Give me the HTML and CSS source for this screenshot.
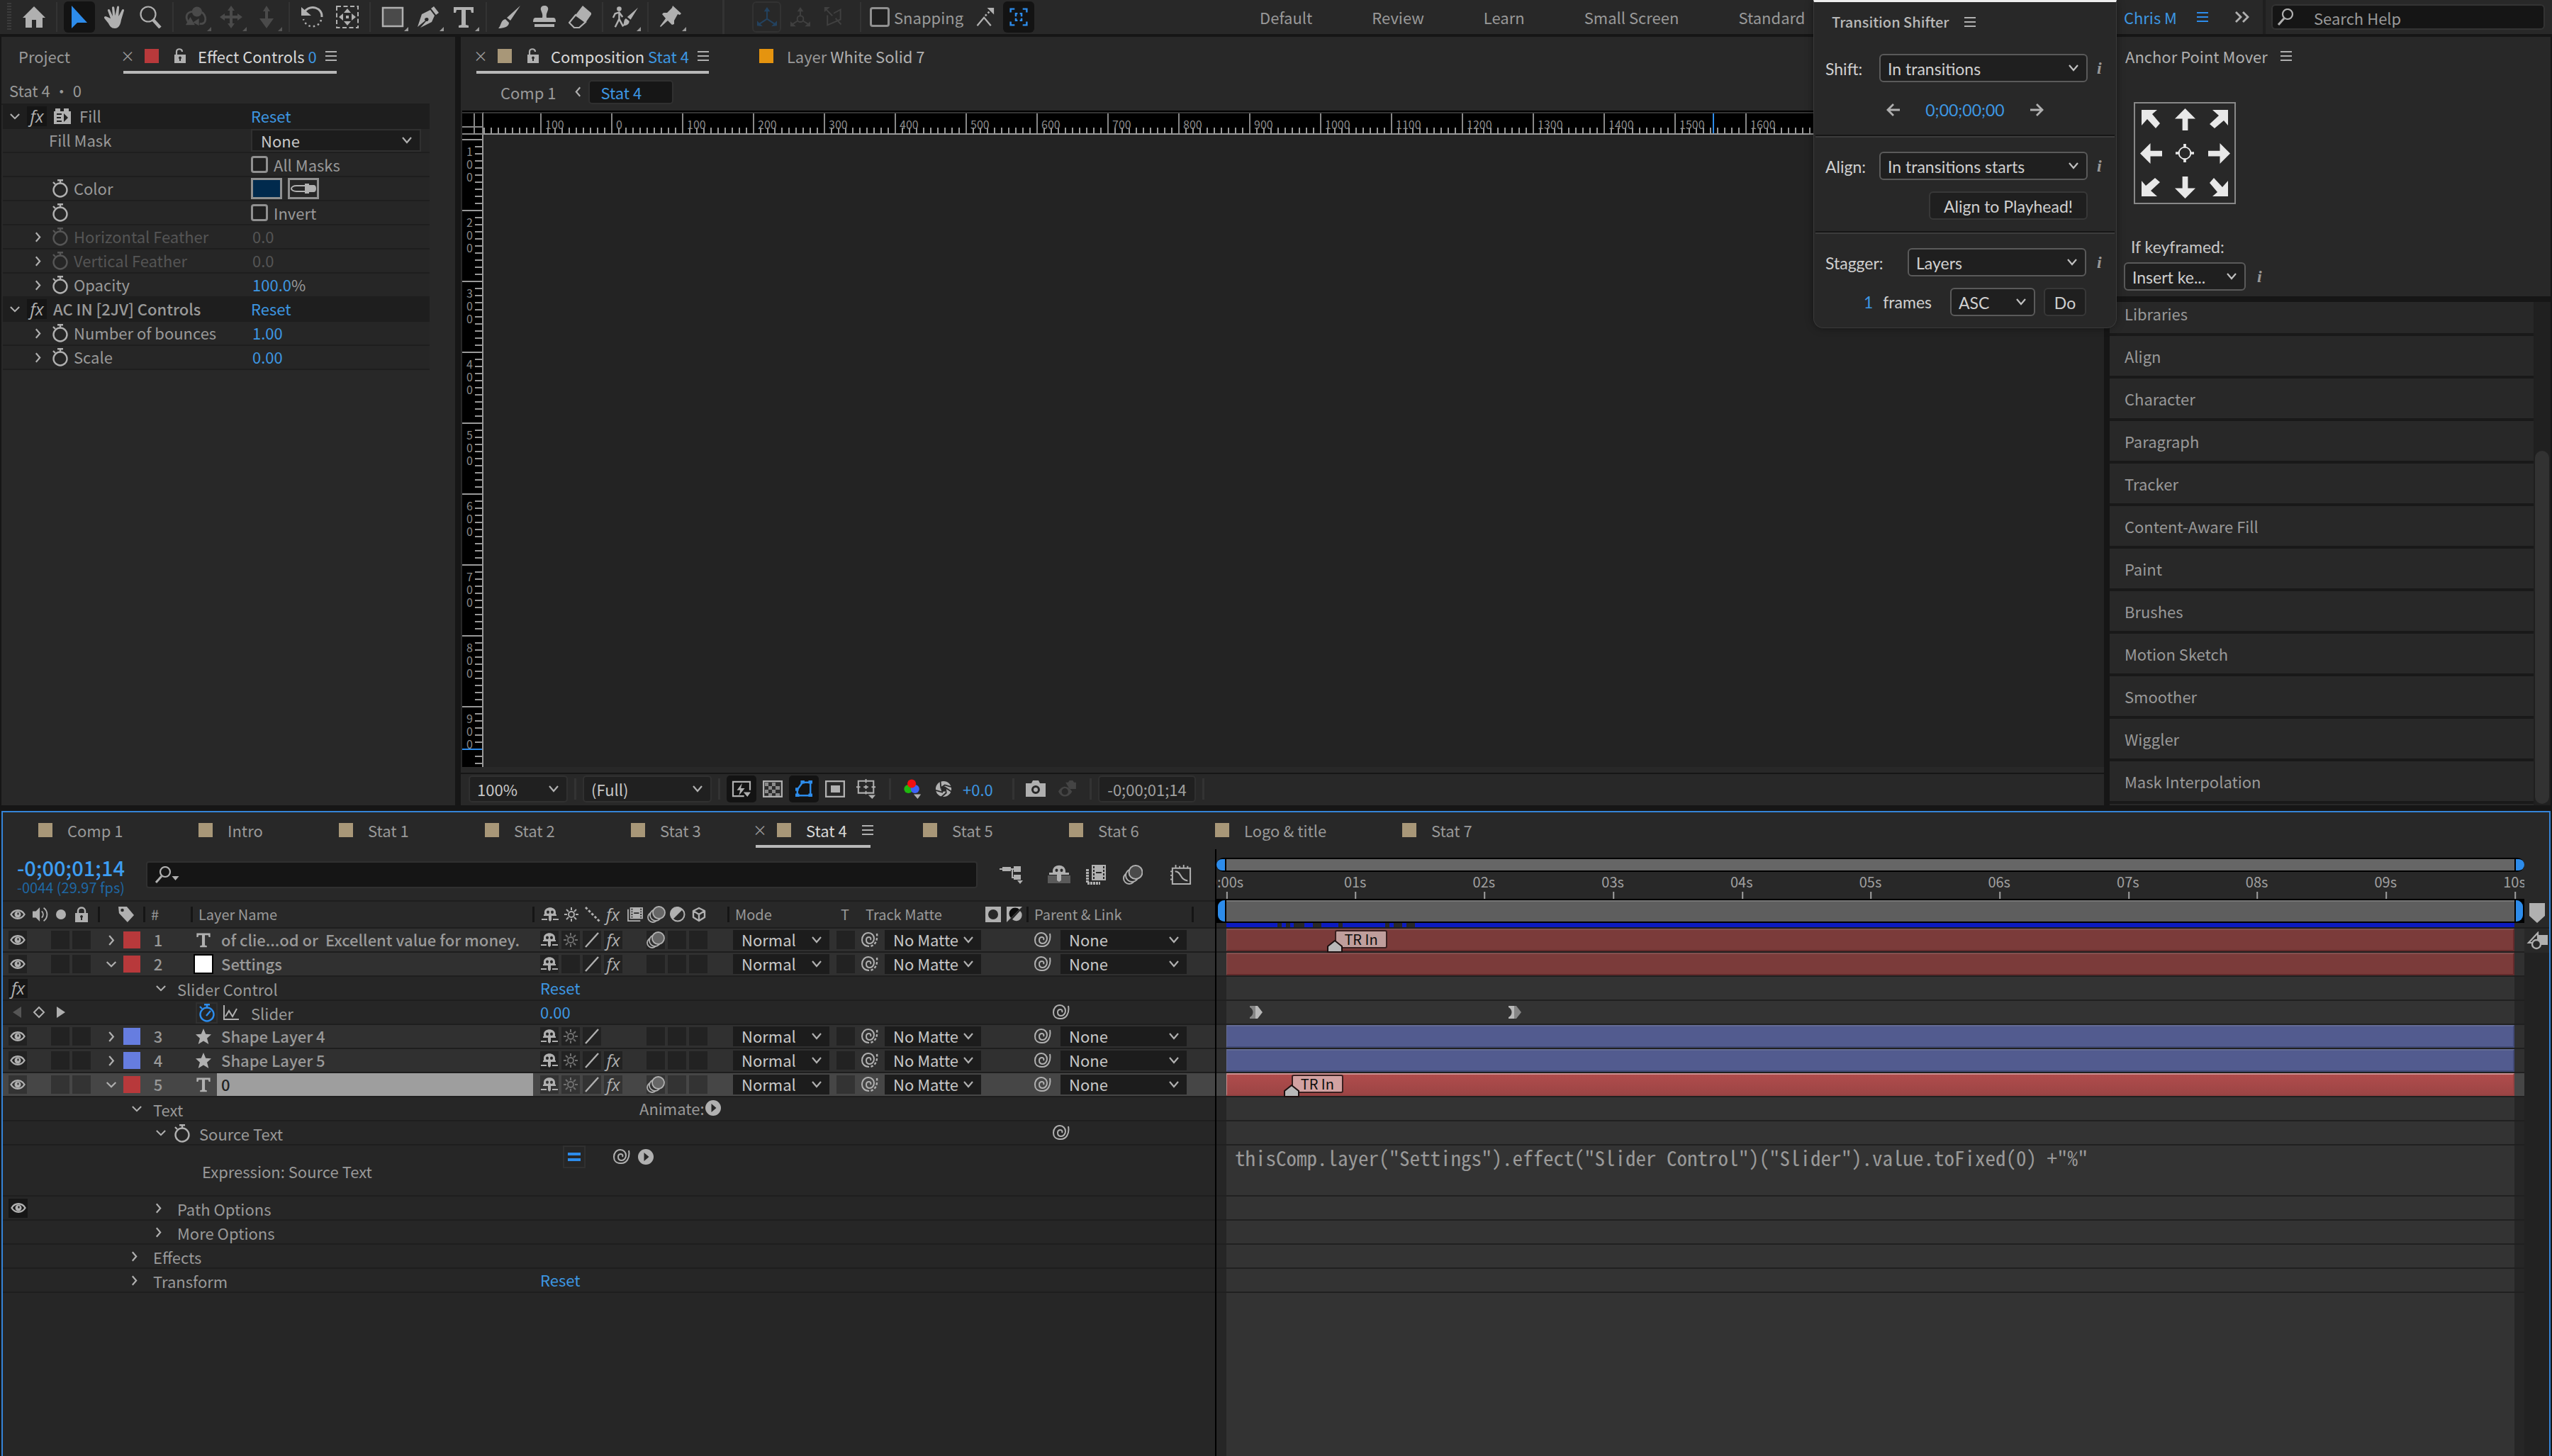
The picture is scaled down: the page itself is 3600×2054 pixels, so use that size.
FILE: index.html
```
<!DOCTYPE html>
<html lang="en">
<head>
<meta charset="utf-8">
<title>Stat 4</title>
<link rel="stylesheet" href="styles.css">
</head>
<body>
<svg class="sprite" aria-hidden="true">
  <symbol id="home" viewBox="0 0 32 32"><path fill="currentColor" d="M16 1 32 17h-4v14h-9V20h-6v11H4V17H0z"/></symbol>
  <symbol id="select" viewBox="0 0 32 32"><path fill="currentColor" d="M5 0v32l8-8h14z"/></symbol>
  <symbol id="hand" viewBox="0 0 32 32"><path fill="currentColor" d="M10 18 6 7c-.6-2 2-3 3-1l4 9-1-12c0-2.400 3-2.400 3.300 0l1.200 11L19 2c.3-2.200 3.300-2 3 .4L21.300 15 26 6c1-2 3.600-1 2.900 1.100L25 20c-1 6-3 12-9 12-5 0-7-3-9-7l-5.600-7c-1.500-2 1-4 3-2.400z"/></symbol>
  <symbol id="magnify" viewBox="0 0 32 32"><g fill="none" stroke="currentColor"><circle cx="13" cy="12" r="10.500" stroke-width="2.200"/><path stroke-width="4.500" d="m20 20 10 11"/></g></symbol>
  <symbol id="orbit" viewBox="0 0 34 32"><g fill="none" stroke="currentColor" stroke-width="3"><path d="M12 8C3 9 1 16 6 24M23 26c12 2 10-14 3-17"/></g><circle cx="19" cy="8" r="7.500" fill="currentColor"/><path fill="currentColor" d="m2 28 14 0L9 16zM22 18v11l-9-5z"/></symbol>
  <symbol id="pan" viewBox="0 0 32 32"><path fill="currentColor" d="m16 0 5 7h-3v7h7v-3l7 5-7 5v-3h-7v7h3l-5 7-5-7h3v-7H7v3l-7-5 7-5v3h7V7h-3z"/></symbol>
  <symbol id="dolly" viewBox="0 0 32 32"><path fill="currentColor" d="m16 0 5 8h-3v10h8L16 32 6 18h8V8h-3z"/></symbol>
  <symbol id="rotate" viewBox="0 0 32 32"><path fill="none" stroke="currentColor" stroke-width="3" d="M5 9C14-3 31 3 30 16"/><path fill="none" stroke="currentColor" stroke-width="2.500" stroke-dasharray="2.500 4" d="M29 20C26 32 8 33 4 19"/><path fill="currentColor" d="M1 2v12h14z"/></symbol>
  <symbol id="anchor" viewBox="0 0 32 32"><g fill="none" stroke="currentColor" stroke-width="2"><path stroke-dasharray="6 3.500" d="M1 1h30v30H1z"/></g><path fill="currentColor" d="m16 4 5 6H11zM16 28l5-6H11zM4 16l6-5v10zM28 16l-6-5v10zM14 14h4v4h-4z"/></symbol>
  <symbol id="rect" viewBox="0 0 32 32"><path fill="#4a4a4a" stroke="currentColor" stroke-width="2.500" d="M2 3h28v26H2z"/></symbol>
  <symbol id="pen" viewBox="0 0 32 32"><path fill="currentColor" d="m24 1 7 9-4 3-7-9zM19 6l6 8-4 9-16 8 8-9c4 1 5-5 1-5s-3 4-2 4L1 30l6-18z"/></symbol>
  <symbol id="type" viewBox="0 0 32 32"><path fill="currentColor" d="M2 2h28v8h-3l-1-4h-7v21l4 1v3H9v-3l4-1V6H6l-1 4H2z"/></symbol>
  <symbol id="brush" viewBox="0 0 32 32"><path fill="currentColor" d="M32 0 18 21l-5-4zM11 19l5 5c0 6-8 8-15 8 4-3 3-12 10-13z"/></symbol>
  <symbol id="stamp" viewBox="0 0 32 32"><path fill="currentColor" d="M16 0c4 0 6 3 5 6-1 4-3 5-2 11h10c2 0 3 2 3 6H0c0-4 1-6 3-6h10c1-6-1-7-2-11-1-3 1-6 5-6zM2 26h28v4H2z"/></symbol>
  <symbol id="eraser" viewBox="0 0 32 32"><path fill="currentColor" d="M20 0 33 11 24 24 10 13z"/><path fill="none" stroke="currentColor" stroke-width="2.200" d="m10 13-9 11 7 7h7l9-8z"/></symbol>
  <symbol id="roto" viewBox="0 0 40 32"><circle cx="11" cy="4" r="3.500" fill="currentColor"/><path fill="none" stroke="currentColor" stroke-width="2.600" d="m2 17 3-6 6-2 5 7M11 9v10l-6 12M11 19l6 11"/><path fill="currentColor" d="M39 2 28 20l-5-4zM21 18l5 4c0 6-6 7-10 7 3-3 1-9 5-11z"/></symbol>
  <symbol id="pin" viewBox="0 0 32 32"><path fill="currentColor" d="m19 0 12 11-2 2-3-1-5 9 0 5-3 1-6-6-10 9-1-1L9 18 4 12l2-2h5l7-7z"/></symbol>
  <symbol id="axis" viewBox="0 0 32 32"><path fill="none" stroke="currentColor" stroke-width="2.200" d="M16 5v14L4 27M16 19l12 8"/><path fill="currentColor" d="m16 0 5 7H11zM0 22v8l9 1zM32 22v8l-9 1z"/></symbol>
  <symbol id="axisworld" viewBox="0 0 32 32"><path fill="none" stroke="currentColor" stroke-width="2.200" d="M16 5v9M12 22l-8 5M20 22l8 5"/><circle cx="16" cy="19" r="5" fill="none" stroke="currentColor" stroke-width="2.200"/><path fill="currentColor" d="m16 0 5 7H11zM0 23v8l9 0zM32 23v8l-9 0z"/></symbol>
  <symbol id="axisview" viewBox="0 0 32 32"><path fill="none" stroke="currentColor" stroke-width="2.200" d="M6 13v16l21-9V4L16 10M3 3l11 11M19 18l9 10"/><path fill="currentColor" d="M1 0h9L1 8z"/></symbol>
  <symbol id="snap" viewBox="0 0 32 32"><path fill="none" stroke="currentColor" stroke-width="2.600" d="m4 30 11-13 11 13"/><path fill="none" stroke="currentColor" stroke-width="3" stroke-dasharray="3 3" d="m17 14 9-9"/><path fill="currentColor" d="M20 1h11v11z"/></symbol>
  <symbol id="snapbox" viewBox="0 0 32 32"><path fill="none" stroke="currentColor" stroke-width="3" d="M2 8V2h7M23 2h7v6M30 24v6h-7M9 30H2v-6M11 15v-5h3M18 10h3v5M21 18v4h-3M14 22h-3v-4"/></symbol>
  <symbol id="menu" viewBox="0 0 16 14"><path stroke="currentColor" stroke-width="2" d="M0 1h16M0 7h16M0 13h16"/></symbol>
  <symbol id="unlock" viewBox="0 0 16 22"><path fill="none" stroke="currentColor" stroke-width="2.200" d="M3 10V5c0-5 8-5 8 0"/><path fill="currentColor" fill-rule="evenodd" d="M0 9h16v12H0zM8 11.500a2 2 0 0 0-1 3.700V18h2v-2.800a2 2 0 0 0-1-3.700z"/></symbol>
  <symbol id="down" viewBox="0 0 16 10"><path fill="none" stroke="currentColor" stroke-width="2.400" d="m1 1 7 7 7-7"/></symbol>
  <symbol id="right" viewBox="0 0 10 16"><path fill="none" stroke="currentColor" stroke-width="2.400" d="m2 1 6 7-6 7"/></symbol>
  <symbol id="watch" viewBox="0 0 24 26"><circle cx="12" cy="15" r="9.500" fill="none" stroke="currentColor" stroke-width="2.400"/><path stroke="currentColor" stroke-width="2.400" d="M8 1.200h8M12 1v4M2 4l3 3"/></symbol>
  <symbol id="watchon" viewBox="0 0 24 26"><circle cx="12" cy="15" r="9.500" fill="none" stroke="currentColor" stroke-width="2.400"/><path stroke="currentColor" stroke-width="2.400" d="M8 1.200h8M12 1v4M2 4l3 3M11 17l6-7"/></symbol>
  <symbol id="brick" viewBox="0 0 24 24"><path fill="currentColor" d="M0 5h2V1h7v4h5V1h7v4h3v18H0z"/><path stroke="#202020" stroke-width="2" d="M4 9h7M4 14h6M4 19h7"/><path fill="#202020" d="m14 8 6 6-6 6z"/></symbol>
  <symbol id="dropper" viewBox="0 0 36 14"><path fill="none" stroke="currentColor" stroke-width="2" d="M22 3H8C4 3 1 5 1 7s3 4 7 4h14"/><path fill="currentColor" d="M20 0h6v2h7c4 0 4 10 0 10h-7v2h-6z"/></symbol>
  <symbol id="eye" viewBox="0 0 22 14"><path fill="none" stroke="currentColor" stroke-width="2.400" d="M1.500 7C6-.6 16-.6 20.500 7 16 14.600 6 14.600 1.500 7z"/><path fill="currentColor" fill-rule="evenodd" d="M11 2.500a4.500 4.500 0 1 0 0 9 4.500 4.500 0 0 0 0-9zm1.500 2v3h-2v-3z"/></symbol>
  <symbol id="speaker" viewBox="0 0 24 22"><path fill="currentColor" d="M0 6h5l6-6v22l-6-6H0z"/><path fill="none" stroke="currentColor" stroke-width="2" d="M14 6c3 3 3 7 0 10M17 1c7 5 7 15 0 20"/></symbol>
  <symbol id="dot" viewBox="0 0 16 16"><circle cx="8" cy="8" r="7" fill="currentColor"/></symbol>
  <symbol id="padlock" viewBox="0 0 18 22"><path fill="none" stroke="currentColor" stroke-width="2.400" d="M4 10V6c0-6 10-6 10 0v4"/><path fill="currentColor" fill-rule="evenodd" d="M0 9h18v13H0zM9 12a2 2 0 0 0-1 3.700V19h2v-3.300A2 2 0 0 0 9 12z"/></symbol>
  <symbol id="tag" viewBox="0 0 24 24"><path fill="currentColor" fill-rule="evenodd" d="M0 0h13l11 13-10 11L1 10zm6 3a2.500 2.500 0 1 0 0 5 2.500 2.500 0 0 0 0-5z"/></symbol>
  <symbol id="shy" viewBox="0 0 24 20"><path fill="currentColor" fill-rule="evenodd" d="M4 10V7c0-9 16-9 16 0v3zM9 4.500a2 2.200 0 1 0 0 4.400 2 2.200 0 0 0 0-4.400zm6 0a2 2.200 0 1 0 0 4.400 2 2.200 0 0 0 0-4.400z"/><path stroke="currentColor" stroke-width="2.200" d="M3 11h18M0 17h8M16 17h8"/><path fill="currentColor" d="M10 9h4v9l-2 2-2-2z"/></symbol>
  <symbol id="sun" viewBox="0 0 22 22"><circle cx="11" cy="11" r="4" fill="none" stroke="currentColor" stroke-width="2"/><path stroke="currentColor" stroke-width="2" d="M11 1v4M11 17v4M1 11h4M17 11h4M4 4l3 3M15 15l3 3M18 4l-3 3M7 15l-3 3"/></symbol>
  <symbol id="quality" viewBox="0 0 22 22"><path stroke="currentColor" stroke-width="3" stroke-dasharray="3.500 2.500" d="m1 1 20 20"/></symbol>
  <symbol id="slash" viewBox="0 0 22 22"><path stroke="currentColor" stroke-width="2.400" d="M2 21 20 1"/></symbol>
  <symbol id="film" viewBox="0 0 24 22"><path fill="currentColor" fill-rule="evenodd" d="M4 0h20v18H4zm2 2v2h2V2zm0 4v2h2V6zm0 4v2h2v-2zm0 4v2h2v-2zM20 2v2h2V2zm0 4v2h2V6zm0 4v2h2v-2zm0 4v2h2v-2zM10 8v2h8V8z"/><path fill="none" stroke="currentColor" stroke-width="2" d="M1 3v18h19"/></symbol>
  <symbol id="blur" viewBox="0 0 26 24"><g fill="none" stroke="currentColor" stroke-width="1.800"><ellipse cx="8" cy="16" rx="7" ry="7"/><ellipse cx="12" cy="13" rx="8" ry="8" fill="#303030"/><ellipse cx="16.500" cy="9.500" rx="8.500" ry="8.500" fill="#666"/></g></symbol>
  <symbol id="adjust" viewBox="0 0 22 22"><circle cx="11" cy="11" r="9.500" fill="none" stroke="currentColor" stroke-width="2"/><path fill="currentColor" d="M18 4A10 10 0 1 0 4 18z"/></symbol>
  <symbol id="cube" viewBox="0 0 22 22"><path fill="none" stroke="currentColor" stroke-width="2.400" stroke-linejoin="round" d="m11 2 8 4v9l-8 5-8-5V6zM3 6l8 5 8-5M11 11v9"/></symbol>
  <symbol id="spiral" viewBox="0 0 24 22"><path fill="none" stroke="currentColor" stroke-width="2" d="M22 2c2 10-3 19-12 18C3 20 1 15 1 11 1 5 5 1 10 1s8 4 8 8-3 7-6 7-5-2-5-5 2-4 4-4 3 2 2 4"/></symbol>
  <symbol id="mattespiral" viewBox="0 0 24 22"><path fill="none" stroke="currentColor" stroke-width="2" d="M11 20C4 20 1 15 1 11 1 5 5 1 10 1s8 4 8 8-3 7-6 7-5-2-5-5 2-4 4-4 3 2 2 4"/><path fill="none" stroke="currentColor" stroke-width="2.400" stroke-dasharray="3.500 2.500" d="M22 2c1 9-2 17-10 18"/></symbol>
  <symbol id="star" viewBox="0 0 24 24"><path fill="currentColor" d="m12 0 3.500 8.500 8.500.5-6.500 6L20 24l-8-5-8 5 2.500-9L0 9l8.500-.5z"/></symbol>
  <symbol id="diamond" viewBox="0 0 18 18"><path fill="none" stroke="currentColor" stroke-width="2" d="m9 2 7 7-7 7-7-7z"/></symbol>
  <symbol id="prev" viewBox="0 0 12 16"><path fill="currentColor" d="M12 0v16L0 8z"/></symbol>
  <symbol id="next" viewBox="0 0 12 16"><path fill="currentColor" d="M0 0v16l12-8z"/></symbol>
  <symbol id="playdot" viewBox="0 0 22 22"><circle cx="11" cy="11" r="11" fill="currentColor"/><path fill="#262626" d="M8.500 5v12l7-6z"/></symbol>
  <symbol id="curve" viewBox="0 0 22 22"><path fill="none" stroke="currentColor" stroke-width="2" d="M1 0v20h21M3 16 8 8l5 8 6-11"/></symbol>
  <symbol id="flow" viewBox="0 0 34 26"><path fill="currentColor" d="M4 2h12v6H4zM20 1h10v8H20zM20 13h10v7H20zM25 21h8l-4 5z"/><path fill="none" stroke="currentColor" stroke-width="2" d="M0 5h20M18 5v12h3"/></symbol>
  <symbol id="shytool" viewBox="0 0 32 26"><path fill="#5a5a5a" d="M0 14h32v11H0z"/><path fill="currentColor" fill-rule="evenodd" d="M7 10V8c0-11 18-11 18 0v2zM12.500 4.500a2 2.300 0 1 0 0 4.600 2 2.300 0 0 0 0-4.600zm7 0a2 2.300 0 1 0 0 4.600 2 2.300 0 0 0 0-4.600z"/><path fill="currentColor" d="M2 10h28v3H2zM13 12h6v9l-3 2-3-2z"/></symbol>
  <symbol id="filmtool" viewBox="0 0 28 28"><path fill="currentColor" fill-rule="evenodd" d="M8 0h20v22H8zm2 2v3h2V2zm0 5v3h2V7zm0 5v3h2v-3zm0 5v3h2v-3zM24 2v3h2V2zm0 5v3h2V7zm0 5v3h2v-3zm0 5v3h2v-3zM14 10v2h8v-2z"/><path fill="none" stroke="currentColor" stroke-width="4" stroke-dasharray="3 1" d="M2 6v20h18"/></symbol>
  <symbol id="blurtool" viewBox="0 0 28 28"><g fill="none" stroke="currentColor" stroke-width="2"><circle cx="9" cy="19" r="8"/><circle cx="13" cy="15" r="9" fill="#282828"/><circle cx="18" cy="10.500" r="9.500" fill="#4a4a4a"/></g></symbol>
  <symbol id="grapher" viewBox="0 0 32 30"><path fill="none" stroke="currentColor" stroke-width="2.200" d="M3 5h27v24H3zM7 10c10 0 7 13 19 14"/><path stroke="currentColor" stroke-width="2" d="M8 0v5M14 2v3M20 0v5M26 2v3M0 10h3M0 16h3M0 22h3"/></symbol>
  <symbol id="matte" viewBox="0 0 22 22"><path fill="currentColor" fill-rule="evenodd" d="M0 0h22v22H0zm11 4a7 7 0 1 0 0 14 7 7 0 0 0 0-14z"/></symbol>
  <symbol id="invmatte" viewBox="0 0 22 22"><path fill="currentColor" d="M0 0h22L0 22z"/><path fill="#0a0a0a" d="M18 4A8 8 0 0 0 6 16z"/><path fill="currentColor" d="M19 6A8 8 0 0 1 8 18z"/></symbol>
  <symbol id="lens" viewBox="0 0 24 24"><circle cx="15" cy="8" r="7" fill="none" stroke="currentColor" stroke-width="2.200"/><path stroke="currentColor" stroke-width="3" d="M10 14 2 23"/></symbol>
  <symbol id="tri" viewBox="0 0 10 6"><path fill="currentColor" d="M0 0h10L5 6z"/></symbol>
  <symbol id="fast" viewBox="0 0 28 26"><path fill="none" stroke="currentColor" stroke-width="2.400" d="M18 24H1V2h26v13"/><path fill="currentColor" d="m15 4-8 11h5l-2 8 9-11h-6zM17 18h11l-5 7z"/></symbol>
  <symbol id="checker" viewBox="0 0 28 24"><path fill="#2c2c2c" stroke="currentColor" stroke-width="2.400" d="M1 1h26v22H1z"/><path fill="#8a8a8a" d="M3 3h5v5H3zM13 3h5v5h-5zM8 8h5v5H8zM18 8h6v5h-6zM3 13h5v5H3zM13 13h5v5h-5zM8 18h5v4H8zM18 18h6v4h-6z"/></symbol>
  <symbol id="maskpath" viewBox="0 0 28 26"><path fill="none" stroke="currentColor" stroke-width="2.600" d="M4 23V14L12 3h12v20z"/><path fill="currentColor" d="M9 0h6v5H9zM21 0h6v5h-6zM21 20h6v5h-6zM1 20h6v5H1zM1 11h5v5H1z"/></symbol>
  <symbol id="region" viewBox="0 0 28 24"><path fill="none" stroke="currentColor" stroke-width="2.600" d="M1 1h26v22H1z"/><path fill="currentColor" d="M8 7h13v10H8z"/></symbol>
  <symbol id="guides" viewBox="0 0 30 30"><path fill="none" stroke="currentColor" stroke-width="2.200" d="M3 3h23v18H3z"/><path stroke="currentColor" stroke-width="2" d="M14.500 0v6M14.500 18v5M0 12h6M23 12h6M14.500 9v6M11 12h7"/><path fill="currentColor" d="M18 24h11l-5 6z"/></symbol>
  <symbol id="rgb" viewBox="0 0 26 30"><circle cx="7" cy="15" r="6.500" fill="#1fb80f"/><circle cx="17" cy="15" r="6.500" fill="#3d62f5"/><circle cx="12" cy="7" r="6.500" fill="#f01010"/><path fill="#b0b0b0" d="M15 23h11l-5 7z"/></symbol>
  <symbol id="shutter" viewBox="0 0 26 26"><circle cx="13" cy="13" r="12" fill="currentColor"/><path fill="none" stroke="#282828" stroke-width="2" d="m8 0 1 11 6-4 10 3M25 17l-9-6 1 8-8 7M1 15l10 3 1-8"/><circle cx="13" cy="13" r="4" fill="#282828"/></symbol>
  <symbol id="camera" viewBox="0 0 28 24"><path fill="currentColor" fill-rule="evenodd" d="M0 4h8l2-4h8l2 4h8v19H0zm14 3a6 6 0 1 0 0 12 6 6 0 0 0 0-12zm0 3a3 3 0 1 1 0 6 3 3 0 0 1 0-6z"/></symbol>
  <symbol id="snapshot" viewBox="0 0 28 26"><path fill="currentColor" fill-rule="evenodd" d="M1 17C6 7 16 7 22 17c-6 10-16 10-21 0zm10-5a5 5 0 1 0 0 10 5 5 0 0 0 0-10zM12 3h4l2-3h5l2 3h3v10H18z"/></symbol>
  <symbol id="arrowl" viewBox="0 0 20 18"><path fill="none" stroke="currentColor" stroke-width="2.800" d="M19 9H3M10 1 2 9l8 8"/></symbol>
  <symbol id="arrowr" viewBox="0 0 20 18"><path fill="none" stroke="currentColor" stroke-width="2.800" d="M1 9h16M10 1l8 8-8 8"/></symbol>
  <symbol id="a-up" viewBox="0 0 32 32"><path fill="currentColor" d="m16 0 15 15H20v17h-8V15H1z"/></symbol>
  <symbol id="a-nw" viewBox="0 0 26 26"><path fill="currentColor" d="M0 0h22l-7 6 11 13-6 7L8 13 0 22z"/></symbol>
  <symbol id="a-mid" viewBox="0 0 28 28"><circle cx="14" cy="14" r="9" fill="none" stroke="currentColor" stroke-width="2"/><path stroke="currentColor" stroke-width="4" d="M14 0v6M14 22v6M0 14h6M22 14h6"/></symbol>
  <symbol id="bin" viewBox="0 0 22 28"><path fill="currentColor" d="M0 0h22v18L11 28 0 18z"/></symbol>
  <symbol id="renderer" viewBox="0 0 30 26"><path fill="currentColor" d="M16 5h14v14H16z"/><path fill="none" stroke="currentColor" stroke-width="2.200" d="M16 2v14H3z"/><circle cx="14" cy="18" r="6" fill="#282828" stroke="currentColor" stroke-width="2.400"/></symbol>
  <symbol id="marker" viewBox="0 0 22 18"><path fill="#b8b8b8" stroke="#1c1010" stroke-width="2" d="M1 17V9l10-8 10 8v8z"/></symbol>
  <symbol id="keyin" viewBox="0 0 18 18"><path fill="#858585" d="M0 0h8v18H0v-2c6-3 6-11 0-14z"/><path fill="#b8b8b8" d="M8 0h3l7 9-7 9H8z"/></symbol>
  <symbol id="keyout" viewBox="0 0 18 18"><path fill="#b8b8b8" d="M0 0h8v18H0v-2c6-3 6-11 0-14z"/><path fill="#858585" d="M8 0h3l7 9-7 9H8z"/></symbol>
  <symbol id="dblright" viewBox="0 0 22 16"><path fill="none" stroke="currentColor" stroke-width="2.800" d="m2 1 7 7-7 7M12 1l7 7-7 7"/></symbol>
</svg>

<header class="toolbar">
  <span class="grip"></span>
  <button class="tool" aria-label="Home"><svg><use href="#home"/></svg></button>
  <span class="sep"></span>
  <button class="tool on" aria-label="Selection"><svg><use href="#select"/></svg></button>
  <button class="tool" aria-label="Hand"><svg><use href="#hand"/></svg></button>
  <button class="tool" aria-label="Zoom"><svg><use href="#magnify"/></svg></button>
  <span class="sep"></span>
  <button class="tool off more" aria-label="Orbit"><svg><use href="#orbit"/></svg></button>
  <button class="tool off more" aria-label="Pan"><svg><use href="#pan"/></svg></button>
  <button class="tool off more" aria-label="Dolly"><svg><use href="#dolly"/></svg></button>
  <span class="sep"></span>
  <button class="tool" aria-label="Rotation"><svg><use href="#rotate"/></svg></button>
  <button class="tool" aria-label="Anchor point"><svg><use href="#anchor"/></svg></button>
  <span class="sep"></span>
  <button class="tool more" aria-label="Rectangle"><svg><use href="#rect"/></svg></button>
  <button class="tool more" aria-label="Pen"><svg><use href="#pen"/></svg></button>
  <button class="tool more" aria-label="Type"><svg><use href="#type"/></svg></button>
  <span class="sep"></span>
  <button class="tool" aria-label="Brush"><svg><use href="#brush"/></svg></button>
  <button class="tool" aria-label="Clone stamp"><svg><use href="#stamp"/></svg></button>
  <button class="tool" aria-label="Eraser"><svg><use href="#eraser"/></svg></button>
  <span class="sep"></span>
  <button class="tool more" aria-label="Roto brush"><svg class="wide"><use href="#roto"/></svg></button>
  <span class="sep"></span>
  <button class="tool more" aria-label="Puppet pin"><svg><use href="#pin"/></svg></button>
  <span class="sep broad"></span>
  <button class="tool axis on-dim" aria-label="Local axis"><svg><use href="#axis"/></svg></button>
  <button class="tool axis off" aria-label="World axis"><svg><use href="#axisworld"/></svg></button>
  <button class="tool axis off" aria-label="View axis"><svg><use href="#axisview"/></svg></button>
  <span class="sep tail"></span>
  <label class="snapping"><input type="checkbox" class="tick big"> Snapping</label>
  <button class="tool axis" aria-label="Snap edges"><svg class="small"><use href="#snap"/></svg></button>
  <button class="tool on" aria-label="Snap features"><svg class="small"><use href="#snapbox"/></svg></button>
  <nav class="workspaces">
    <a href="#">Default</a><a href="#">Review</a><a href="#">Learn</a><a href="#">Small Screen</a><a href="#">Standard</a>
  </nav>
  <div class="account">
    <a href="#" class="current">Chris M</a>
    <button class="bare blue" aria-label="Workspace menu"><svg class="i-menu"><use href="#menu"/></svg></button>
    <button class="bare" aria-label="More workspaces"><svg class="i-dbl"><use href="#dblright"/></svg></button>
  </div>
  <label class="help"><svg><use href="#lens"/></svg><input type="text" placeholder="Search Help" aria-label="Search Help"></label>
</header>

<main class="upper">
  <section class="panel effects">
    <div class="tabs">
      <a href="#" class="tab plain">Project</a>
      <div class="tab active"><span class="close">×</span><i class="sw red"></i><svg class="i-lock"><use href="#unlock"/></svg><span>Effect Controls <b>0</b></span><svg class="i-menu"><use href="#menu"/></svg></div>
    </div>
    <p class="crumb">Stat 4 · 0</p>
    <div class="fxlist">
      <div class="fxrow head"><span class="slot"><svg class="i-down"><use href="#down"/></svg></span><span class="fx">fx</span><svg class="i-brick"><use href="#brick"/></svg><span class="name">Fill</span><a href="#" class="val">Reset</a></div>
      <div class="fxrow"><label class="name deep" for="fillmask">Fill Mask</label><select id="fillmask" class="dd val mask"><option>None</option></select></div>
      <div class="fxrow"><label class="val"><input type="checkbox" class="tick">All Masks</label></div>
      <div class="fxrow"><span class="slot prop"></span><svg class="i-watch"><use href="#watch"/></svg><span class="name">Color</span><div class="val"><button class="color" aria-label="Color"></button><button class="eyedrop" aria-label="Pick color"><svg><use href="#dropper"/></svg></button></div></div>
      <div class="fxrow"><span class="slot prop"></span><svg class="i-watch"><use href="#watch"/></svg><label class="val"><input type="checkbox" class="tick">Invert</label></div>
      <div class="fxrow"><span class="slot prop"><svg class="i-right"><use href="#right"/></svg></span><svg class="i-watch dim"><use href="#watch"/></svg><span class="name dim">Horizontal Feather</span><span class="val dim">0.0</span></div>
      <div class="fxrow"><span class="slot prop"><svg class="i-right"><use href="#right"/></svg></span><svg class="i-watch dim"><use href="#watch"/></svg><span class="name dim">Vertical Feather</span><span class="val dim">0.0</span></div>
      <div class="fxrow"><span class="slot prop"><svg class="i-right"><use href="#right"/></svg></span><svg class="i-watch"><use href="#watch"/></svg><span class="name">Opacity</span><span class="val"><b>100.0</b>%</span></div>
      <div class="fxrow head"><span class="slot"><svg class="i-down"><use href="#down"/></svg></span><span class="fx">fx</span><span class="name strong">AC IN [2JV] Controls</span><a href="#" class="val">Reset</a></div>
      <div class="fxrow"><span class="slot prop"><svg class="i-right"><use href="#right"/></svg></span><svg class="i-watch"><use href="#watch"/></svg><span class="name">Number of bounces</span><span class="val"><b>1.00</b></span></div>
      <div class="fxrow"><span class="slot prop"><svg class="i-right"><use href="#right"/></svg></span><svg class="i-watch"><use href="#watch"/></svg><span class="name">Scale</span><span class="val"><b>0.00</b></span></div>
    </div>
  </section>

  <section class="panel comp">
    <div class="tabs">
      <div class="tab active"><span class="close">×</span><i class="sw tan"></i><svg class="i-lock"><use href="#unlock"/></svg><span>Composition <b>Stat 4</b></span><svg class="i-menu"><use href="#menu"/></svg></div>
      <div class="tab layer"><i class="sw orange"></i><span>Layer <em>White Solid 7</em></span></div>
    </div>
    <nav class="crumbs"><a href="#">Comp 1</a><svg class="i-left"><use href="#right"/></svg><a href="#" class="here">Stat 4</a></nav>
    <div class="viewer">
      <div class="corner"></div>
      <div class="hruler"><i class="cursor-x"></i><span>100</span><span>0</span><span>100</span><span>200</span><span>300</span><span>400</span><span>500</span><span>600</span><span>700</span><span>800</span><span>900</span><span>1000</span><span>1100</span><span>1200</span><span>1300</span><span>1400</span><span>1500</span><span>1600</span></div>
      <div class="vruler"><i class="cursor-y"></i><span>100</span><span>200</span><span>300</span><span>400</span><span>500</span><span>600</span><span>700</span><span>800</span><span>900</span></div>
      <div class="canvas"></div>
    </div>
    <footer class="viewbar">
      <select class="dd zoom" aria-label="Magnification"><option>100%</option></select>
      <i class="bar"></i>
      <select class="dd res" aria-label="Resolution"><option>(Full)</option></select>
      <i class="bar"></i>
      <button class="vb on" aria-label="Fast previews"><svg><use href="#fast"/></svg></button>
      <button class="vb" aria-label="Transparency grid"><svg><use href="#checker"/></svg></button>
      <button class="vb on blue" aria-label="Mask visibility"><svg><use href="#maskpath"/></svg></button>
      <button class="vb" aria-label="Region of interest"><svg><use href="#region"/></svg></button>
      <button class="vb" aria-label="Guides"><svg class="tall"><use href="#guides"/></svg></button>
      <i class="bar"></i>
      <button class="vb" aria-label="Channels"><svg class="tall"><use href="#rgb"/></svg></button>
      <button class="vb" aria-label="Reset exposure"><svg><use href="#shutter"/></svg></button>
      <a href="#" class="expo">+0.0</a>
      <i class="bar"></i>
      <button class="vb" aria-label="Take snapshot"><svg><use href="#camera"/></svg></button>
      <button class="vb off" aria-label="Show snapshot"><svg><use href="#snapshot"/></svg></button>
      <i class="bar"></i>
      <button class="tc">-0;00;01;14</button>
      <i class="bar"></i>
    </footer>
  </section>

  <aside class="side">
    <section class="panel mover">
      <div class="tabs"><div class="tab bright">Anchor Point Mover<svg class="i-menu"><use href="#menu"/></svg></div></div>
      <div class="pad">
        <button aria-label="Top left"><svg class="d"><use href="#a-nw"/></svg></button><button aria-label="Top"><svg><use href="#a-up"/></svg></button><button aria-label="Top right"><svg class="d r90"><use href="#a-nw"/></svg></button>
        <button aria-label="Left"><svg class="r270"><use href="#a-up"/></svg></button><button aria-label="Center"><svg class="d"><use href="#a-mid"/></svg></button><button aria-label="Right"><svg class="r90"><use href="#a-up"/></svg></button>
        <button aria-label="Bottom left"><svg class="d r270"><use href="#a-nw"/></svg></button><button aria-label="Bottom"><svg class="r180"><use href="#a-up"/></svg></button><button aria-label="Bottom right"><svg class="d r180"><use href="#a-nw"/></svg></button>
      </div>
      <label class="iflabel" for="ifkey">If keyframed:</label>
      <div class="ifrow"><select id="ifkey" class="box"><option>Insert ke...</option></select><span class="info">i</span></div>
    </section>
    <section class="panel stack">
      <nav class="closed">
        <a href="#">Libraries</a><a href="#">Align</a><a href="#">Character</a><a href="#">Paragraph</a><a href="#">Tracker</a><a href="#">Content-Aware Fill</a><a href="#">Paint</a><a href="#">Brushes</a><a href="#">Motion Sketch</a><a href="#">Smoother</a><a href="#">Wiggler</a><a href="#">Mask Interpolation</a>
      </nav>
      <div class="scroll"><i></i></div>
    </section>
  </aside>
</main>

<section class="timeline">
  <div class="comptabs">
    <div class="ctab wide1"><i class="sw tan"></i>Comp 1</div>
    <div class="ctab wide2"><i class="sw tan"></i>Intro</div>
    <div class="ctab"><i class="sw tan"></i>Stat 1</div>
    <div class="ctab"><i class="sw tan"></i>Stat 2</div>
    <div class="ctab"><i class="sw tan"></i>Stat 3</div>
    <div class="ctab active"><span class="close">×</span><i class="sw tan"></i>Stat 4<svg class="i-menu"><use href="#menu"/></svg></div>
    <div class="ctab"><i class="sw tan"></i>Stat 5</div>
    <div class="ctab"><i class="sw tan"></i>Stat 6</div>
    <div class="ctab wide3"><i class="sw tan"></i>Logo &amp; title</div>
    <div class="ctab"><i class="sw tan"></i>Stat 7</div>
  </div>
  <div class="tbody">
    <div class="layers">
      <div class="ttop">
        <div class="time"><strong>-0;00;01;14</strong><small>-0044 (29.97 fps)</small></div>
        <label class="find"><svg class="i-lens"><use href="#lens"/></svg><svg class="i-tri"><use href="#tri"/></svg><input type="text" aria-label="Search layers"></label>
        <div class="ttools">
          <button class="bare" aria-label="Mini-flowchart"><svg class="t34"><use href="#flow"/></svg></button>
          <button class="bare" aria-label="Hide shy layers"><svg class="t32"><use href="#shytool"/></svg></button>
          <button class="bare" aria-label="Frame blending"><svg class="t28"><use href="#filmtool"/></svg></button>
          <button class="bare" aria-label="Motion blur"><svg class="t28"><use href="#blurtool"/></svg></button>
          <button class="bare graph" aria-label="Graph editor"><svg class="t32"><use href="#grapher"/></svg></button>
        </div>
      </div>
      <div class="thead">
        <div class="h-av"><svg class="i-eye"><use href="#eye"/></svg><svg class="i22"><use href="#speaker"/></svg><svg class="i-dot"><use href="#dot"/></svg><svg class="i22"><use href="#padlock"/></svg></div>
        <div class="h-tag"><svg class="i22"><use href="#tag"/></svg></div>
        <div class="h-num">#</div>
        <div class="h-name">Layer Name</div>
        <div class="h-sw"><svg class="i-shy"><use href="#shy"/></svg><svg class="i22"><use href="#sun"/></svg><svg class="i22"><use href="#quality"/></svg><span class="fxs">fx</span><svg class="i-shy"><use href="#film"/></svg><svg class="i-blur"><use href="#blur"/></svg><svg class="i22"><use href="#adjust"/></svg><svg class="i22"><use href="#cube"/></svg></div>
        <div class="h-mode"><span>Mode</span><span>T</span><span>Track Matte</span><svg class="i22"><use href="#matte"/></svg><svg class="i22"><use href="#invmatte"/></svg></div>
        <div class="h-parent">Parent &amp; Link</div>
        <div class="h-end"></div>
      </div>

      <div class="row layer">
        <div class="av"><span><svg class="i-eye"><use href="#eye"/></svg></span><span class="gap"></span><span></span><span></span></div>
        <div class="lab"><svg class="i-right"><use href="#right"/></svg><i class="red"></i></div>
        <div class="num">1</div><div class="kind"><svg class="i22"><use href="#type"/></svg></div><div class="lname">of clie...od or&nbsp; Excellent value for money.</div>
        <div class="switches"><span><svg class="i-shy"><use href="#shy"/></svg></span><span class="faint"><svg class="i22"><use href="#sun"/></svg></span><span><svg class="i22"><use href="#slash"/></svg></span><span class="fxs">fx</span><span class="none"></span><span><svg class="i-blur"><use href="#blur"/></svg></span><span></span><span></span></div>
        <select class="dd mode" aria-label="Mode 1"><option>Normal</option></select><span class="tbox"></span><svg class="pick mt"><use href="#mattespiral"/></svg><select class="dd tm" aria-label="Track matte 1"><option>No Matte</option></select><svg class="pick pt"><use href="#spiral"/></svg><select class="dd par" aria-label="Parent 1"><option>None</option></select>
      </div>
      <div class="row layer">
        <div class="av"><span><svg class="i-eye"><use href="#eye"/></svg></span><span class="gap"></span><span></span><span></span></div>
        <div class="lab"><svg class="i-down"><use href="#down"/></svg><i class="red"></i></div>
        <div class="num">2</div><div class="kind"><i class="null"></i></div><div class="lname">Settings</div>
        <div class="switches"><span><svg class="i-shy"><use href="#shy"/></svg></span><span></span><span><svg class="i22"><use href="#slash"/></svg></span><span class="fxs">fx</span><span class="none"></span><span></span><span></span><span></span></div>
        <select class="dd mode" aria-label="Mode 2"><option>Normal</option></select><span class="tbox"></span><svg class="pick mt"><use href="#mattespiral"/></svg><select class="dd tm" aria-label="Track matte 2"><option>No Matte</option></select><svg class="pick pt"><use href="#spiral"/></svg><select class="dd par" aria-label="Parent 2"><option>None</option></select>
      </div>
      <div class="row prop">
        <div class="lead"><span class="fxbox">fx</span></div>
        <div class="pname in2"><span class="slot"><svg class="i-down"><use href="#down"/></svg></span>Slider Control</div>
        <div class="pval"><a href="#">Reset</a></div>
      </div>
      <div class="row prop">
        <div class="lead keys"><svg class="i-key off"><use href="#prev"/></svg><svg class="i-dia"><use href="#diamond"/></svg><svg class="i-key"><use href="#next"/></svg></div>
        <div class="pname in4"><span class="won"><svg class="i-watch"><use href="#watchon"/></svg></span><svg class="i22 curve"><use href="#curve"/></svg>Slider</div>
        <div class="pval"><b>0.00</b></div><svg class="pick far"><use href="#spiral"/></svg>
      </div>
      <div class="row layer">
        <div class="av"><span><svg class="i-eye"><use href="#eye"/></svg></span><span class="gap"></span><span></span><span></span></div>
        <div class="lab"><svg class="i-right"><use href="#right"/></svg><i class="indigo"></i></div>
        <div class="num">3</div><div class="kind"><svg class="i22"><use href="#star"/></svg></div><div class="lname">Shape Layer 4</div>
        <div class="switches"><span><svg class="i-shy"><use href="#shy"/></svg></span><span class="faint"><svg class="i22"><use href="#sun"/></svg></span><span><svg class="i22"><use href="#slash"/></svg></span><span class="none"></span><span class="none"></span><span></span><span></span><span></span></div>
        <select class="dd mode" aria-label="Mode 3"><option>Normal</option></select><span class="tbox"></span><svg class="pick mt"><use href="#mattespiral"/></svg><select class="dd tm" aria-label="Track matte 3"><option>No Matte</option></select><svg class="pick pt"><use href="#spiral"/></svg><select class="dd par" aria-label="Parent 3"><option>None</option></select>
      </div>
      <div class="row layer">
        <div class="av"><span><svg class="i-eye"><use href="#eye"/></svg></span><span class="gap"></span><span></span><span></span></div>
        <div class="lab"><svg class="i-right"><use href="#right"/></svg><i class="indigo"></i></div>
        <div class="num">4</div><div class="kind"><svg class="i22"><use href="#star"/></svg></div><div class="lname">Shape Layer 5</div>
        <div class="switches"><span><svg class="i-shy"><use href="#shy"/></svg></span><span class="faint"><svg class="i22"><use href="#sun"/></svg></span><span><svg class="i22"><use href="#slash"/></svg></span><span class="fxs">fx</span><span class="none"></span><span></span><span></span><span></span></div>
        <select class="dd mode" aria-label="Mode 4"><option>Normal</option></select><span class="tbox"></span><svg class="pick mt"><use href="#mattespiral"/></svg><select class="dd tm" aria-label="Track matte 4"><option>No Matte</option></select><svg class="pick pt"><use href="#spiral"/></svg><select class="dd par" aria-label="Parent 4"><option>None</option></select>
      </div>
      <div class="row layer chosen">
        <div class="av"><span><svg class="i-eye"><use href="#eye"/></svg></span><span class="gap"></span><span></span><span></span></div>
        <div class="lab"><svg class="i-down"><use href="#down"/></svg><i class="red"></i></div>
        <div class="num">5</div><div class="kind"><svg class="i22"><use href="#type"/></svg></div><div class="lname">0</div>
        <div class="switches"><span><svg class="i-shy"><use href="#shy"/></svg></span><span class="faint"><svg class="i22"><use href="#sun"/></svg></span><span><svg class="i22"><use href="#slash"/></svg></span><span class="fxs">fx</span><span class="none"></span><span><svg class="i-blur"><use href="#blur"/></svg></span><span></span><span></span></div>
        <select class="dd mode" aria-label="Mode 5"><option>Normal</option></select><span class="tbox"></span><svg class="pick mt"><use href="#mattespiral"/></svg><select class="dd tm" aria-label="Track matte 5"><option>No Matte</option></select><svg class="pick pt"><use href="#spiral"/></svg><select class="dd par" aria-label="Parent 5"><option>None</option></select>
      </div>
      <div class="row prop">
        <div class="lead"></div>
        <div class="pname in1"><span class="slot"><svg class="i-down"><use href="#down"/></svg></span>Text</div>
        <div class="pval animate">Animate:<svg class="i22"><use href="#playdot"/></svg></div>
      </div>
      <div class="row prop">
        <div class="lead"></div>
        <div class="pname in2"><span class="slot"><svg class="i-down"><use href="#down"/></svg></span><svg class="i-watch snug"><use href="#watch"/></svg>Source Text</div>
        <div class="pval"></div><svg class="pick far"><use href="#spiral"/></svg>
      </div>
      <div class="row prop tall">
        <div class="lead"></div>
        <div class="pname in3">Expression: Source Text</div>
        <div class="pval expr"><button class="eq" aria-label="Enable expression"><i></i><i></i></button><svg class="pick"><use href="#spiral"/></svg><svg class="i22"><use href="#playdot"/></svg></div>
      </div>
      <div class="row prop">
        <div class="lead"><span class="fxbox"><svg class="i-eye"><use href="#eye"/></svg></span></div>
        <div class="pname in2"><span class="slot"><svg class="i-right"><use href="#right"/></svg></span>Path Options</div>
      </div>
      <div class="row prop">
        <div class="lead"></div>
        <div class="pname in2"><span class="slot"><svg class="i-right"><use href="#right"/></svg></span>More Options</div>
      </div>
      <div class="row prop">
        <div class="lead"></div>
        <div class="pname in1"><span class="slot"><svg class="i-right"><use href="#right"/></svg></span>Effects</div>
      </div>
      <div class="row prop">
        <div class="lead"></div>
        <div class="pname in1"><span class="slot"><svg class="i-right"><use href="#right"/></svg></span>Transform</div>
        <div class="pval"><a href="#">Reset</a></div>
      </div>
    </div>

    <div class="tracks">
      <div class="navbar"><i class="cap l"></i><i class="fill"></i><i class="cap r"></i></div>
      <div class="seconds"><div>
        <span style="left:0%">0:00s</span><span style="left:10%">01s</span><span style="left:20%">02s</span><span style="left:30%">03s</span><span style="left:40%">04s</span><span style="left:50%">05s</span><span style="left:60%">06s</span><span style="left:70%">07s</span><span style="left:80%">08s</span><span style="left:90%">09s</span><span style="left:100%">10s</span>
      </div></div>
      <div class="workarea"><i class="cap l"></i><i class="fill"></i><i class="cap r"></i></div>
      <div class="cache"><i></i></div>
      <div class="track layer"><div class="lane clip red"><div class="flag" style="left:8.4%"><svg><use href="#marker"/></svg><span>TR In</span></div></div></div>
      <div class="track layer"><div class="lane clip red"></div></div>
      <div class="track"><div class="lane"></div></div>
      <div class="track"><div class="lane"><svg class="key" style="left:2.300%"><use href="#keyin"/></svg><svg class="key" style="left:22.400%"><use href="#keyout"/></svg></div></div>
      <div class="track layer"><div class="lane clip indigo"></div></div>
      <div class="track layer"><div class="lane clip indigo"></div></div>
      <div class="track layer chosen"><div class="lane clip redsel"><div class="flag" style="left:5%"><svg><use href="#marker"/></svg><span>TR In</span></div></div></div>
      <div class="track"><div class="lane"></div></div>
      <div class="track"><div class="lane"></div></div>
      <div class="track tall"><div class="lane"><code>thisComp.layer("Settings").effect("Slider Control")("Slider").value.toFixed(0) +"%"</code></div></div>
      <div class="track"><div class="lane"></div></div>
      <div class="track"><div class="lane"></div></div>
      <div class="track"><div class="lane"></div></div>
      <div class="track"><div class="lane"></div></div>
      <div class="track rest"><div class="lane"></div></div>
    </div>

    <div class="edge"><div class="edgetop"><svg class="e1"><use href="#bin"/></svg></div><div class="edgebtn"><svg class="e2"><use href="#renderer"/></svg></div><div class="edgerest"></div></div>
  </div>
</section>

<section class="shifter">
  <h2>Transition Shifter<svg class="i-menu"><use href="#menu"/></svg></h2>
  <div class="line"><label for="shift">Shift:</label><select id="shift" class="box w294"><option>In transitions</option></select><span class="info">i</span></div>
  <div class="nudge"><button class="bare" aria-label="Earlier"><svg><use href="#arrowl"/></svg></button><b>0;00;00;00</b><button class="bare" aria-label="Later"><svg><use href="#arrowr"/></svg></button></div>
  <hr>
  <div class="line"><label for="align">Align:</label><select id="align" class="box w294"><option>In transitions starts</option></select><span class="info">i</span></div>
  <div class="line"><button class="push playhead">Align to Playhead!</button></div>
  <hr>
  <div class="line"><label for="stagger">Stagger:</label><select id="stagger" class="box w252"><option>Layers</option></select><span class="info">i</span></div>
  <div class="line last"><span class="frames"><b>1</b> frames</span><select class="box w120" aria-label="Order"><option>ASC</option></select><button class="push do">Do</button></div>
</section>
</body>
</html>
```
FILE: styles.css
```
:root {
  --bg: #282828;
  --gap: #161616;
  --row: #262626;
  --rule: #1e1e1e;
  --text: #999;
  --bright: #c8c8c8;
  --icon: #b0b0b0;
  --blue: #3d97e2;
  --key: #2d8ceb;
}
* { box-sizing: border-box; }
html, body { margin: 0; height: 100%; }
body {
  display: grid;
  grid-template-rows: 52px 6fr 5fr;
  min-height: 100vh;
  overflow: hidden;
  background: var(--gap);
  color: var(--text);
  font: 22px/28px "Noto Sans CJK SC", "Noto Sans", sans-serif;
}
a { color: inherit; text-decoration: none; }
b, em { font-weight: inherit; font-style: normal; color: var(--blue); }
button, select, input { font: inherit; color: inherit; margin: 0; }
button { padding: 0; border: 0; background: none; }
svg { flex: none; display: block; color: var(--icon); overflow: visible; }
.sprite { position: absolute; width: 0; height: 0; }
.bare { display: flex; align-items: center; justify-content: center; }
.vb.blue svg, .bare.blue svg { color: var(--key); }

/* icon sizes */
.i-menu { width: 16px; height: 14px; }
.i-lock { width: 16px; height: 22px; }
.i-down { width: 14px; height: 9px; }
.i-right { width: 9px; height: 15px; }
.i-left { width: 9px; height: 15px; transform: rotate(180deg); }
.i-watch { width: 24px; height: 26px; }
.i-brick { width: 24px; height: 24px; }
.i-eye { width: 22px; height: 14px; }
.i22 { width: 22px; height: 22px; }
.i-dot { width: 16px; height: 16px; }
.i-shy { width: 24px; height: 20px; }
.i-blur { width: 26px; height: 24px; }
.i-key { width: 12px; height: 16px; }
.i-dia { width: 18px; height: 18px; }
.i-dbl { width: 22px; height: 16px; }

/* toolbar */
.toolbar { display: flex; align-items: center; background: var(--bg); border-bottom: 4px solid var(--gap); }
.grip { width: 6px; height: 40px; margin: 0 7px 0 10px; background: repeating-linear-gradient(#3c3c3c 0 2px, transparent 2px 4px); }
.tool { position: relative; display: flex; align-items: center; justify-content: center; width: 44px; height: 44px; margin: 0 3px; border-radius: 6px; }
.tool svg { width: 32px; height: 32px; }
.tool svg.wide { width: 38px; }
.tool svg.small { width: 26px; height: 26px; }
.tool.on { background: #131313; }
.tool.on svg { color: var(--key); }
.tool.off svg { color: #4a4a4a; }
.tool.more::after { content: ""; position: absolute; right: 0; bottom: 2px; border: 3px solid transparent; border-right-color: #999; border-bottom-color: #999; }
.tool.more.off::after { border-right-color: #555; border-bottom-color: #555; }
.tool.axis { width: 41px; }
.tool.axis svg { width: 30px; height: 28px; }
.tool.on-dim { border: 2px solid #323232; }
.tool.on-dim svg { color: #23425f; }
.tool.axis.off svg { color: #404040; }
.sep { width: 2px; height: 42px; margin: 0 6px; background: #333; }
.sep.broad { margin: 0 36px 0 48px; width: 3px; height: 48px; }
.sep.tail { margin: 0 12px 0 14px; }
.snapping { display: flex; align-items: center; gap: 6px; margin-right: 6px; }
.tick { appearance: none; flex: none; width: 24px; height: 24px; border: 3px solid #909090; border-radius: 4px; background: #202020; }
.tick.big { width: 28px; height: 28px; }
.workspaces { display: flex; gap: 84px; margin-left: 315px; }
.account { display: flex; align-items: center; margin-left: auto; gap: 28px; padding-right: 18px; height: 48px; border-right: 4px solid #1f1f1f; }
.account .current { color: var(--blue); }
.account .i-dbl { margin-left: 9px; }
.help { display: flex; align-items: center; gap: 28px; width: 386px; height: 36px; margin: 0 10px 0 8px; padding-left: 6px; border: 2px solid #333; border-radius: 6px; background: #151515; }
.help svg { width: 24px; height: 24px; }
.help input { width: 280px; padding: 2px 0 0; border: 0; background: none; }
.help input::placeholder { color: var(--text); opacity: 1; }

/* upper workspace */
.upper { display: grid; grid-template-columns: 640px minmax(0, 1fr) 622px; gap: 8px; padding: 0 2px 8px; min-height: 0; }
.panel { background: var(--bg); min-height: 0; min-width: 0; }
.tabs { display: flex; height: 52px; align-items: flex-end; }
.tab { display: flex; align-items: center; height: 52px; border-bottom: 4px solid transparent; padding-top: 5px; }
.tab.active { border-bottom-color: #b8b8b8; color: #d8d8d8; }
.tab .close, .ctab .close { width: 10px; color: var(--text); font-size: 20px; text-indent: -4px; }
.sw { width: 20px; height: 20px; flex: none; }
.red { background: #b8393b; }
.tan { background: #a89778; }
.orange { background: #e5940f; }
.indigo { background: #667de0; }

.effects .tab.plain { padding-left: 24px; width: 172px; }
.effects .tab.active .sw, .comp .tab.active .sw { margin: 0 22px 0 20px; }
.tab .i-lock { margin-right: 17px; }
.tab .i-menu { margin-left: 12px; }
.crumb { margin: 0; padding: 9px 11px 0; height: 42px; }
.fxlist { width: 604px; padding-left: 2px; border-top: 2px solid var(--rule); }
.fxrow { position: relative; display: flex; align-items: center; height: 34px; border-bottom: 2px solid var(--rule); background: var(--row); }
.fxrow.head { background: var(--rule); }
.fxrow .val { position: absolute; left: 350px; display: flex; align-items: center; height: 32px; }
.fxrow a.val { color: var(--blue); }
.fxrow a.val, .fxrow span.val, .fxrow .name { padding-bottom: 2px; }
.fxrow span.val { padding-left: 2px; }
.fxrow .name { margin-left: 7px; }
.fxrow.head .name { margin-left: 12px; }
.fxrow .name.strong { font-weight: 500; margin-left: 9px; }
.fxrow .name.deep { margin-left: 65px; }
.fxrow .slot { display: flex; justify-content: center; width: 34px; }
.fxrow .slot.prop { width: 30px; margin: 0 5px 0 34px; }
.fxrow .fx { width: 28px; background: #151515; text-align: center; }
.fxrow .i-brick { margin-left: 10px; }
.fx, .fxs, .fxbox { font: italic 24px/28px "Open Sans", sans-serif; color: var(--icon); }
.dim, .dim svg, .i-watch.dim { color: #555; }
.fxrow .tick { margin-right: 8px; }
.color { width: 44px; height: 30px; border: 3px solid #909090; background: #012a4d; margin-right: 8px; }
.eyedrop { width: 44px; height: 30px; border: 3px solid #909090; display: flex; align-items: center; justify-content: center; }
.eyedrop svg { width: 36px; height: 14px; }

/* drop-downs */
.dd {
  appearance: none;
  padding: 0 12px 2px;
  border: 0;
  color: var(--bright);
  background: #1c1c1c url('data:image/svg+xml,<svg xmlns="http://www.w3.org/2000/svg" width="16" height="10"><path fill="none" stroke="%23b0b0b0" stroke-width="2.200" d="m2 1 6 7 6-7"/></svg>') no-repeat right 10px center;
}
.dd.mask { width: 240px; border: 2px solid #303030; }

/* composition viewer */
.comp { display: flex; flex-direction: column; }
.comp .tabs { padding-left: 22px; }
.comp .tab.layer { margin-left: 71px; }
.comp .tab.layer .sw { margin-right: 19px; }
.tab.layer em { color: #b0b0b0; }
.crumbs { display: flex; align-items: center; height: 52px; padding: 0 0 1px 56px; }
.crumbs .i-left { margin: 0 10px 0 26px; }
.crumbs .here { width: 120px; height: 34px; padding: 1px 16px; border: 2px solid #303030; border-radius: 5px; background: #161616; color: var(--blue); }
.viewer { flex: 1; display: grid; grid-template: 32px minmax(0, 1fr) / 30px minmax(0, 1fr); margin: 0 0 8px 2px; border-top: 2px solid #000; background: #232323; overflow: hidden; }
.corner { background: linear-gradient(#888, #888) 16px 0 / 2px 100% no-repeat, linear-gradient(#888, #888) 0 18px / 100% 2px no-repeat, #000; border-right: 2px solid #888; border-bottom: 2px solid #888; border-top: 2px solid #333; }
.hruler, .vruler { position: relative; overflow: hidden; font-size: 16px; color: #8a8a8a; background-color: #000; }
.hruler { display: flex; padding-left: 80px; border-top: 2px solid #333; border-bottom: 2px solid #999; background-image: repeating-linear-gradient(90deg, #999 0 2px, transparent 2px 10px); background-size: 100% 8px; background-position: 0 20px; background-repeat: no-repeat; }
.hruler span { flex: 0 0 100px; padding-left: 5px; border-left: 2px solid #888; line-height: 30px; }
.vruler { border-right: 2px solid #999; padding-top: 6px; background-image: repeating-linear-gradient(transparent 0 6px, #999 6px 8px, transparent 8px 10px); background-size: 10px 100%; background-position: right 0; background-repeat: no-repeat; }
.vruler span { display: block; height: 100px; padding: 6px 13px 0 6px; border-top: 2px solid #999; line-height: 18px; word-break: break-all; width: 28px; }
.cursor-x { position: absolute; left: 1734px; top: 0; width: 2px; height: 100%; background: var(--key); }
.cursor-y { position: absolute; left: 0; top: 866px; width: 100%; height: 2px; background: var(--key); }
.viewbar { display: flex; align-items: center; height: 46px; padding: 0 0 2px 11px; border-top: 2px solid var(--gap); }
.viewbar .dd { height: 38px; border: 2px solid #303030; border-radius: 5px; background-color: #202020; padding: 0 10px; }
.viewbar .zoom { width: 140px; }
.viewbar .res { width: 182px; }
.viewbar .bar { width: 3px; height: 30px; margin: 0 9px; background: #333; }
.vb { width: 42px; height: 38px; margin-right: 2px; display: flex; align-items: center; justify-content: center; border-radius: 5px; }
.vb.on { background: #131313; }
.vb svg { width: 28px; height: 24px; }
.vb svg.tall { height: 28px; }
.vb.off svg { color: #444; }
.expo { width: 65px; padding-left: 4px; color: var(--blue); }
.tc { width: 138px; height: 38px; border: 2px solid #303030; border-radius: 5px; background: #202020; color: #a0a0a0; }

/* right side */
.side { display: grid; grid-template-rows: 366px minmax(0, 1fr); gap: 8px; min-height: 0; }
.mover { padding-left: 20px; font-family: Lato, sans-serif; font-size: 23px; }
.mover .tab { margin-left: 2px; gap: 6px; font-family: "Noto Sans CJK SC", sans-serif; font-size: 22px; color: #b0b0b0; }
.pad { display: grid; grid-template-columns: repeat(3, 48px); grid-auto-rows: 48px; width: 144px; margin: 40px 0 0 14px; background: linear-gradient(#888, #888) 0 0 / 100% 2px no-repeat, linear-gradient(#888, #888) 0 100% / 100% 2px no-repeat, linear-gradient(#888, #888) 0 0 / 2px 100% no-repeat, linear-gradient(#888, #888) 100% 0 / 2px 100% no-repeat; }
.pad button { display: flex; align-items: center; justify-content: center; }
.pad svg { width: 31px; height: 31px; color: #e8e8e8; }
.pad svg.d { width: 26px; height: 26px; }
.r90 { transform: rotate(90deg); }
.r180 { transform: rotate(180deg); }
.r270 { transform: rotate(270deg); }
.iflabel { display: block; margin: 46px 0 8px 10px; color: var(--bright); }
.ifrow { display: flex; align-items: center; gap: 16px; }
.ifrow .box { width: 172px; }
.info { font: italic bold 24px/30px "Liberation Serif", serif; color: #999; }
.box {
  appearance: none;
  height: 40px;
  padding: 2px 10px 0;
  border: 2px solid #5a5a5a;
  border-radius: 6px;
  color: #d0d0d0;
  background: #1f1f1f url('data:image/svg+xml,<svg xmlns="http://www.w3.org/2000/svg" width="16" height="10"><path fill="none" stroke="%23c0c0c0" stroke-width="2.200" d="m2 1 6 7 6-7"/></svg>') no-repeat right 10px center;
}
.stack { display: grid; grid-template-columns: minmax(0, 1fr) 22px; gap: 2px; overflow: hidden; background: #1f1f1f; }
.closed { display: flex; flex-direction: column; padding-bottom: 2px; background: var(--bg); }
.closed a { height: 60px; flex: none; padding: 14px 0 0 21px; border-bottom: 4px solid #191919; }
.closed a:first-child { height: 48px; padding-top: 2px; }
.scroll { padding-top: 210px; padding-bottom: 2px; background: #202020; }
.scroll i { display: block; width: 20px; height: 100%; border-radius: 10px; background: #323232; }

/* timeline */
.timeline { display: flex; flex-direction: column; margin: 0 2px; border: 2px solid #3584d8; border-bottom: 0; background: var(--bg); min-height: 0; overflow: hidden; }
.comptabs { display: flex; gap: 110px; height: 52px; padding: 0 0 2px 50px; }
.ctab { display: flex; align-items: center; gap: 21px; width: 96px; height: 50px; border-bottom: 4px solid transparent; padding-top: 4px; white-space: nowrap; }
.ctab.wide1 { width: 116px; }
.ctab.wide2 { width: 88px; }
.ctab.wide3 { width: 154px; }
.ctab.active { width: 162px; margin: 0 -36px 0 -30px; color: #d8d8d8; border-bottom-color: #b8b8b8; }
.ctab.active .close { margin-right: -1px; }
.ctab.active .i-menu { margin-left: auto; }
.tbody { flex: 1; display: grid; grid-template-columns: 1710px minmax(0, 1fr) 35px; min-height: 0; }
.layers { background: var(--row); }
.ttop { display: flex; align-items: flex-start; height: 74px; border-bottom: 2px solid var(--rule); background: var(--bg); }
.time { width: 202px; padding: 9px 0 0 20px; }
.time strong { display: block; font-size: 29px; line-height: 33px; font-weight: 500; color: #3d9df0; white-space: nowrap; }
.time small { display: block; font-size: 20px; line-height: 24px; color: #1f67a3; white-space: nowrap; }
.find { display: flex; align-items: center; width: 1173px; height: 38px; margin-top: 17px; padding-left: 10px; border: 2px solid #303030; border-radius: 4px; background: #151515; }
.find input { flex: 1; border: 0; background: none; }
.i-lens { width: 24px; height: 24px; }
.i-tri { width: 11px; height: 6px; margin-top: 10px; }
.ttools { display: flex; gap: 22px; margin: 22px 0 0 33px; }
.ttools .bare { height: 28px; width: 30px; }
.ttools .bare:first-child { margin-right: 15px; }
.ttools .graph { margin-left: 16px; }
.t34 { width: 34px; height: 26px; }
.t32 { width: 32px; height: 28px; }
.t28 { width: 28px; height: 28px; }
.thead { display: flex; align-items: center; height: 38px; border-bottom: 2px solid var(--rule); background: var(--bg); font-size: 20px; }
.thead > div { display: flex; align-items: center; height: 22px; border-left: 3px solid #151515; }
.thead > .h-av { width: 134px; gap: 10px; padding-left: 10px; border-left: 0; }
.h-tag { width: 64px; padding-left: 26px; }
.h-num { width: 67px; padding-left: 8px; }
.h-name { width: 482px; padding-left: 8px; }
.h-sw { width: 275px; padding-left: 7px; }
.h-sw > * { margin: 0 4px; }
.h-sw > .i-shy { margin: 0 3px; }
.h-sw > .i-blur { margin: 0 2px; }
.h-sw > .fxs { width: 22px; }
.h-mode { width: 422px; padding-left: 8px; }
.h-mode span:nth-child(1) { width: 149px; }
.h-mode span:nth-child(2) { width: 35px; }
.h-mode span:nth-child(3) { width: 169px; }
.h-mode svg + svg { margin-left: 8px; }
.h-parent { width: 233px; padding-left: 8px; }

.row { display: grid; height: 34px; border-bottom: 2px solid var(--rule); }
.row.layer { grid-template-columns: 132px 70px 32px 68px 446px 282px 136px 10px 26px 42px 136px 62px 50px 178px; align-items: center; background: #303030; }
.av { display: flex; gap: 4px; padding-left: 8px; }
.av span, .switches span, .tbox { display: flex; align-items: center; justify-content: center; width: 26px; height: 26px; background: #222; }
.av .gap, .switches .none { background: none; }
.lab { display: flex; align-items: center; justify-content: space-between; padding: 0 8px 0 13px; height: 32px; }
.lab svg { width: 16px; }
.lab i { width: 24px; height: 24px; }
.num { padding: 0 0 2px 2px; text-align: center; font-weight: 500; }
.kind { display: flex; justify-content: flex-end; padding-right: 8px; }
.null { width: 28px; height: 28px; margin-right: -3px; border: 2px solid #000; background: #fff; }
.lname { height: 32px; padding-left: 6px; line-height: 31px; font-weight: 500; }
.switches { display: flex; gap: 4px; padding-left: 10px; }
.switches .faint svg { color: #707070; }
.row .dd { height: 28px; padding: 0 12px 2px; line-height: 26px; }
.tbox { grid-column: 9; }
.pick { width: 24px; height: 22px; }
.mt { grid-column: 10; justify-self: center; }
.tm { grid-column: 11; }
.pt { grid-column: 13; justify-self: center; }
.par { grid-column: 14; }
.chosen.layer { background: #464646; }
.chosen .av span, .chosen .switches span, .chosen .tbox { background: #333; }
.chosen .av .gap, .chosen .switches .none { background: none; }
.chosen .lname { background: #9e9e9e; color: #222; }

.row.prop { grid-template-columns: 132px 616px 741px 1fr; align-items: center; background: var(--row); }
.row.tall, .track.tall { height: 72px; }
.lead { padding-left: 8px; display: flex; }
.keys { align-items: center; gap: 16px; padding-left: 14px; }
.off { color: #555; }
.fxbox { display: flex; align-items: center; justify-content: center; width: 27px; height: 27px; background: #161616; }
.pname { display: flex; align-items: center; padding-top: 1px; }
.pname .slot { display: flex; width: 34px; padding-right: 12px; justify-content: center; }
.pname .slot .i-right { margin-right: 8px; }
.in1 { padding-left: 46px; }
.in2 { padding-left: 80px; }
.in3 { padding-left: 149px; }
.in4 { padding-left: 140px; }
.won { display: flex; justify-content: center; width: 31px; border: 2px solid #303030; }
.won svg { color: var(--key); }
.curve { margin: 0 17px 0 8px; }
.snug { margin: 0 12px 0 -5px; }
.pval { display: flex; align-items: center; padding: 0 0 2px 10px; }
.pval a { color: var(--blue); }
.animate { padding-left: 150px; gap: 1px; }
.far { margin-left: -8px; }
.expr { align-self: start; padding-left: 42px; }
.eq { width: 32px; height: 32px; border: 2px solid #303030; padding: 4px 6px; display: flex; flex-direction: column; gap: 4px; justify-content: center; align-items: center; }
.eq i { width: 18px; height: 4px; background: var(--key); }
.expr .pick { margin: 0 11px 0 39px; }

/* tracks */
.tracks { display: flex; flex-direction: column; border-left: 2px solid #000; background: var(--bg); overflow: hidden; }
.navbar, .workarea { display: grid; grid-template-columns: 12px minmax(0, 1fr) 12px; }
.navbar { height: 20px; margin-top: 12px; background: #000; padding: 2px 0; border-radius: 10px; }
.navbar .fill { margin: 0 2px; background: #666; }
.workarea { height: 34px; padding: 2px 0; background: #000; }
.workarea .fill { margin: 0 2px; background: #5e5e5e; border-top: 2px solid #747474; }
.cap { background: var(--key); }
.cap.l { border-radius: 9px 0 0 9px; }
.cap.r { border-radius: 0 9px 9px 0; }
.workarea .cap.l { margin-left: 2px; }
.workarea .cap.r { margin-right: 2px; }
.seconds { height: 38px; padding: 0 14px; font-size: 20px; }
.seconds div { position: relative; height: 100%; }
.seconds span { position: absolute; bottom: 0; transform: translateX(-50%); height: 38px; line-height: 28px; color: #a0a0a0; }
.seconds span::after { content: ""; position: absolute; left: 50%; bottom: 0; width: 2px; height: 10px; background: #a0a0a0; }
.cache { height: 8px; padding: 0 14px; border-bottom: 2px solid var(--rule); }
.cache i { display: block; height: 6px; background: linear-gradient(90deg, #0d1bbf 72px, #282828 72px 78px, #0d1bbf 78px 84px, #282828 84px 90px, #0d1bbf 90px 95px, #282828 95px 110px, #0d1bbf 110px 122px, #282828 122px 134px, #0d1bbf 134px 158px, #282828 158px 164px, #0d1bbf 164px 224px, #282828 224px 230px, #0d1bbf 230px 236px, #282828 236px 248px, #0d1bbf 248px 254px, #282828 254px 266px, #0d1bbf 266px); }
.track { flex: none; height: 34px; padding: 0 14px; border-bottom: 2px solid #202020; background: var(--row); }
.track.layer { background: #303030; }
.track.chosen { background: #464646; }
.track.rest { flex: 1; border: 0; }
.lane { position: relative; height: 100%; background: #333; }
.clip { border: 2px solid; border-width: 2px 2px 2px 1px; }
.clip.red { background: #7b3b3a; border-color: #84504f #642b2c #642b2c #84504f; }
.clip.indigo { background: #525b8f; border-color: #636b94 #424b78 #424b78 #636b94; }
.clip.redsel { background: linear-gradient(#b04c4c, #9c4545); border-color: #cc9090 #964242 #964242 #cc9090; }
.flag { position: absolute; top: 0; }
.flag svg { position: absolute; left: -11px; top: 14px; width: 22px; height: 18px; z-index: 1; }
.flag span { display: block; height: 26px; padding: 0 11px; border: 2px solid #3a2020; border-radius: 3px; background: #bf9e9c; color: #0c0c0c; font-size: 20px; line-height: 21px; white-space: nowrap; }
.redsel .flag span { background: #d2a2a2; }
.key { position: absolute; top: 7px; margin-left: -9px; width: 18px; height: 18px; }
code { display: block; padding: 2px 0 0 12px; font: 29px/28px "Noto Sans Mono CJK SC", "Liberation Mono", monospace; color: #999; white-space: pre; }

.edge { display: flex; flex-direction: column; background: #222; }
.edgetop { height: 112px; display: flex; align-items: flex-end; justify-content: center; padding-bottom: 6px; border-bottom: 2px solid var(--rule); background: var(--bg); }
.edgebtn { height: 34px; display: flex; align-items: center; justify-content: center; background: var(--bg); }
.e1 { width: 22px; height: 28px; }
.e2 { width: 30px; height: 26px; }

/* floating panel */
.shifter { position: absolute; top: 0; right: 614px; width: 428px; padding: 0 2px 16px; border: 1px solid #3a3a3a; border-top: 3px solid #eee; border-radius: 0 0 14px 14px; background: var(--bg); color: #d0d0d0; font-family: Lato, sans-serif; font-size: 23px; box-shadow: 0 0 12px rgba(0, 0, 0, .4); }
.shifter h2 { display: flex; align-items: center; gap: 22px; margin: 0; height: 73px; padding: 0 0 17px 23px; font: 500 20px/28px "Noto Sans CJK SC", sans-serif; color: #b8b8b8; }
.shifter .line { display: flex; align-items: center; height: 40px; margin-bottom: 16px; padding: 0 0 0 14px; }
.shifter .line label { margin-right: auto; padding-top: 2px; }
.shifter .info { width: 38px; padding-left: 13px; }
.w294 { width: 294px; }
.w252 { width: 252px; margin-right: 2px; }
.w120 { width: 120px; }
.nudge { display: flex; align-items: center; gap: 32px; height: 56px; padding: 0 0 10px 100px; }
.nudge svg { width: 20px; height: 18px; }
.nudge b { width: 118px; text-align: center; white-space: nowrap; }
.shifter hr { margin: 2px 0 20px; border: 0; border-top: 2px solid #161616; border-bottom: 2px solid #3c3c3c; }
.shifter .line.last { margin: 0; }
.push { height: 40px; padding-top: 2px; border: 2px solid #383838; border-radius: 6px; background: #1f1f1f; }
.playhead { width: 224px; margin: 0 38px 0 auto; }
.frames { margin: 0 26px 0 auto; white-space: pre; }
.frames b { margin-right: 8px; }
.push.do { width: 60px; margin: 0 40px 0 12px; }
```
